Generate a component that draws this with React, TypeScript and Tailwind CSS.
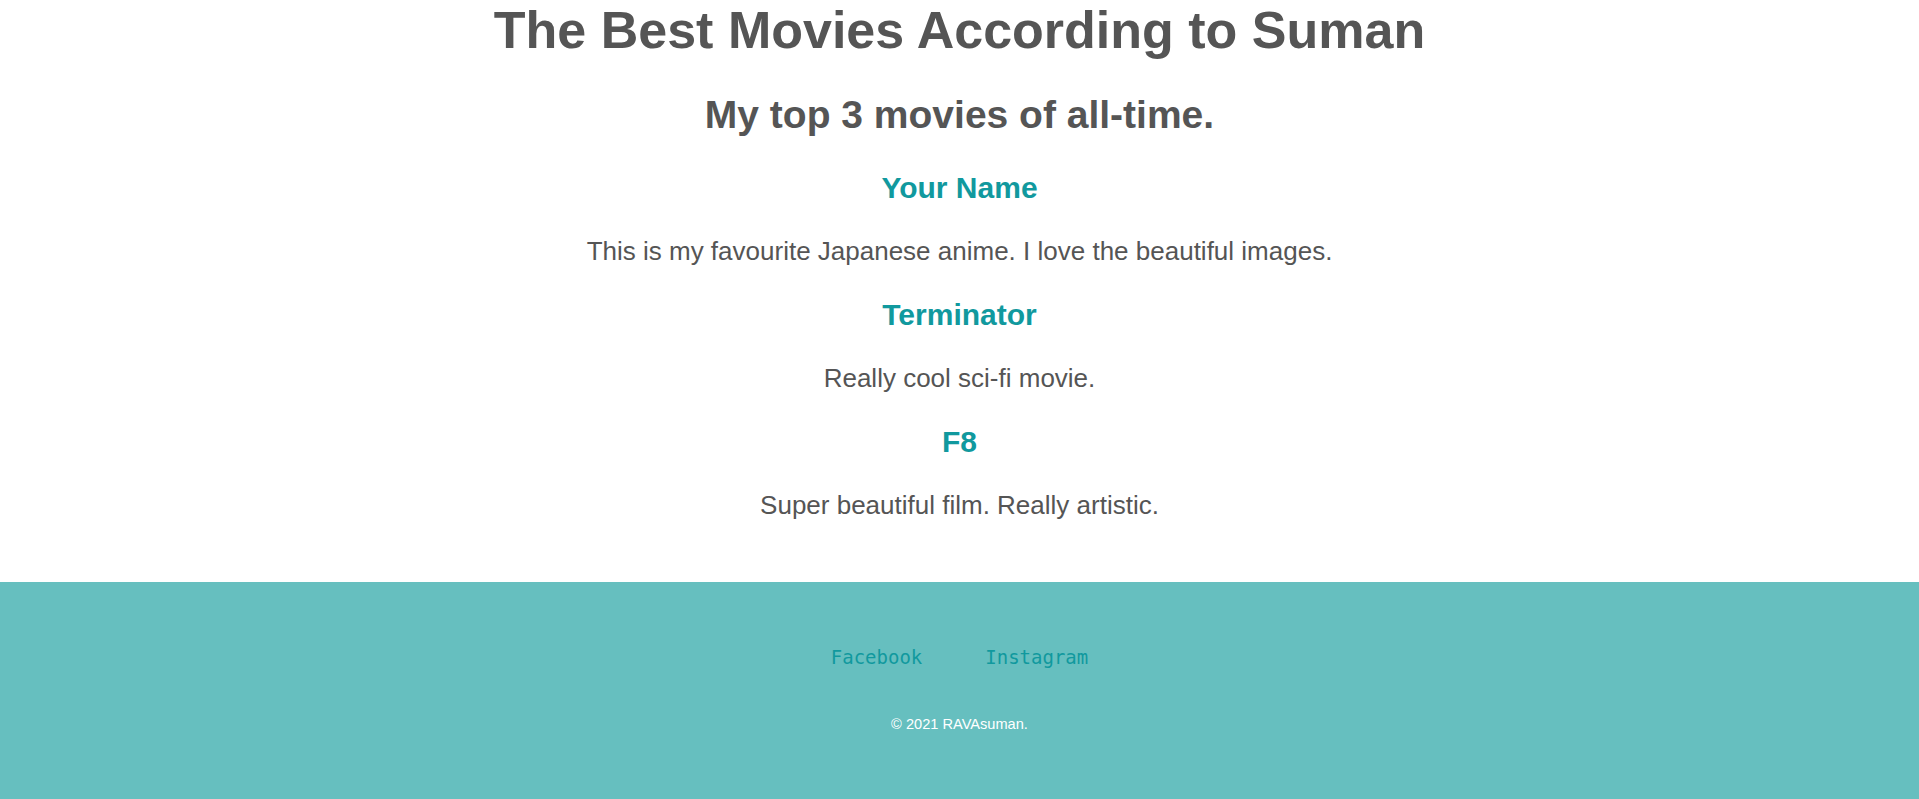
import React from "react";

const movies = [
  { title: "Your Name", text: "This is my favourite Japanese anime. I love the beautiful images." },
  { title: "Terminator", text: "Really cool sci-fi movie." },
  { title: "F8", text: "Super beautiful film. Really artistic." },
];

export default function App() {
  return (
    <div className="bg-white min-h-[799px] font-['Liberation_Sans',Arial,sans-serif] text-center">
      <main>
        <h1 className="text-[52px] leading-[60px] font-bold text-[#555555]">
          The Best Movies According to Suman
        </h1>
        <h2 className="mt-[32px] text-[39px] leading-[45px] font-bold text-[#555555]">
          My top 3 movies of all-time.
        </h2>
        {movies.map((m, i) => (
          <section key={m.title}>
            <h3
              className={
                (i === 0 ? "mt-[33px] " : "mt-[31px] ") +
                "text-[30px] leading-[35px] font-bold text-[#11999E]"
              }
            >
              {m.title}
            </h3>
            <p className="mt-[31px] text-[26px] leading-[30px] text-[#555555]">{m.text}</p>
          </section>
        ))}
      </main>
      <footer className="mt-[62px] bg-[#66BFBF] pt-[64px] pb-[70px]">
        <div className="flex justify-center gap-[63px] font-['DejaVu_Sans_Mono',monospace] text-[19px] leading-[22px] text-[#11999E]">
          <a href="#">Facebook</a>
          <a href="#">Instagram</a>
        </div>
        <p className="mt-[48px] text-[14.6px] leading-[17px] text-white">© 2021 RAVAsuman.</p>
      </footer>
    </div>
  );
}
